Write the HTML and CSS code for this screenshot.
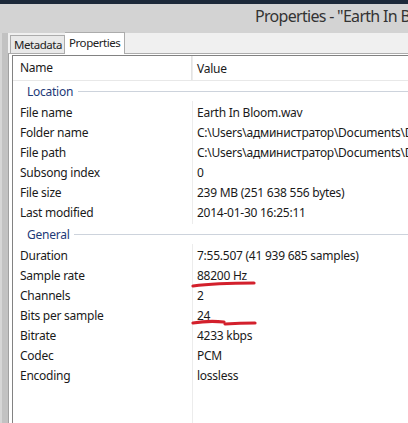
FILE: index.html
```html
<!DOCTYPE html>
<html>
<head>
<meta charset="utf-8">
<link rel="stylesheet" href="styles.css">
</head>
<body>
<div class="topstrip"></div>
<div class="titlebar"><span class="title">Properties - "Earth In Bloom.wav"</span></div>
<div class="main">
  <div class="leftframe"></div>
  <div class="dialog">
    <div class="tabs">
      <div class="tab">Metadata</div>
      <div class="tab active">Properties</div>
    </div>
    <div class="tabpage">
      <div class="list">
        <div class="header">
          <div class="cell name">Name</div>
          <div class="cell value">Value</div>
        </div>
        <div class="group first"><span>Location</span><i></i></div>
        <div class="row"><div class="cell name">File name</div><div class="cell value">Earth In Bloom.wav</div></div>
        <div class="row"><div class="cell name">Folder name</div><div class="cell value">C:\Users\администратор\Documents\Downloads</div></div>
        <div class="row"><div class="cell name">File path</div><div class="cell value">C:\Users\администратор\Documents\Downloads\Earth In Bloom.wav</div></div>
        <div class="row"><div class="cell name">Subsong index</div><div class="cell value">0</div></div>
        <div class="row"><div class="cell name">File size</div><div class="cell value">239 MB (251 638 556 bytes)</div></div>
        <div class="row"><div class="cell name">Last modified</div><div class="cell value">2014-01-30 16:25:11</div></div>
        <div class="group"><span>General</span><i></i></div>
        <div class="row"><div class="cell name">Duration</div><div class="cell value">7:55.507 (41 939 685 samples)</div></div>
        <div class="row"><div class="cell name">Sample rate</div><div class="cell value">88200 Hz</div></div>
        <div class="row"><div class="cell name">Channels</div><div class="cell value">2</div></div>
        <div class="row"><div class="cell name">Bits per sample</div><div class="cell value">24</div></div>
        <div class="row"><div class="cell name">Bitrate</div><div class="cell value">4233 kbps</div></div>
        <div class="row"><div class="cell name">Codec</div><div class="cell value">PCM</div></div>
        <div class="row"><div class="cell name">Encoding</div><div class="cell value">lossless</div></div>
      </div>
    </div>
  </div>
</div>
<svg class="marks" width="408" height="423" viewBox="0 0 408 423">
  <path d="M193 286 Q 215 283 254 283" fill="none" stroke="#d3202c" stroke-width="3.2" stroke-linecap="round"/>
  <path d="M193 323 Q 208 320.5 224 322" fill="none" stroke="#d3202c" stroke-width="3.2" stroke-linecap="round"/>
  <path d="M225 324 Q 240 323 255 323" fill="none" stroke="#d3202c" stroke-width="3.2" stroke-linecap="round"/>
</svg>
</body>
</html>
```

FILE: styles.css
```css
html, body {
  margin: 0;
  padding: 0;
}
body {
  width: 408px;
  height: 423px;
  overflow: hidden;
  position: relative;
  background: #ffffff;
  font-family: "Noto Sans", "Open Sans", sans-serif;
  font-size: 12px;
  letter-spacing: -0.25px;
  color: #1a1a1a;
}
.topstrip {
  height: 4px;
  background: #1c2939;
}
.titlebar {
  height: 29px;
  background: #d3d3d3;
  padding-left: 255px;
  white-space: nowrap;
  overflow: hidden;
  box-sizing: border-box;
}
.title {
  display: block;
  font-size: 16px;
  letter-spacing: -0.7px;
  line-height: 25px;
  color: #333333;
}
.main {
  display: flex;
  height: 390px;
}
.leftframe {
  width: 8px;
  flex: none;
  background: linear-gradient(to right, #d6d6d6 0, #d6d6d6 2px, #c2c2c2 2px, #c2c2c2 8px);
}
.dialog {
  flex: 1;
  display: flex;
  flex-direction: column;
  background: #f0f0f0;
  min-width: 0;
}
.tabs {
  height: 20px;
  display: flex;
  align-items: flex-end;
  padding-left: 2px;
}
.tab {
  height: 18px;
  box-sizing: border-box;
  border: 1px solid #acacac;
  border-bottom: 0;
  background: #e9e9e9;
  padding: 0 2px 0 3px;
  line-height: 17px;
  color: #222;
  font-size: 11.5px;
  letter-spacing: -0.45px;
  white-space: nowrap;
}
.tab.active {
  height: 22px;
  margin-bottom: -1px;
  background: #ffffff;
  border-left: 0;
  padding: 0 4px 0 4px;
  line-height: 20px;
  position: relative;
  z-index: 1;
}
.tabpage {
  flex: 1;
  background: #ffffff;
  border-top: 1px solid #acacac;
  border-left: 1px solid #a0a0a0;
  padding: 1px 0 0 3px;
}
.list {
  height: 100%;
  border-top: 1px solid #828282;
  border-left: 1px solid #828282;
  background: linear-gradient(to right, transparent 179px, #ececec 179px, #ececec 180px, transparent 180px);
}
.header {
  display: flex;
  height: 24px;
  border-bottom: 1px solid #e8e8e8;
  align-items: center;
}
.row {
  display: flex;
  height: 20px;
  align-items: center;
}
.cell {
  white-space: nowrap;
  overflow: hidden;
}
.cell.name {
  width: 179px;
  flex: none;
  padding-left: 7px;
  box-sizing: border-box;
}
.cell.value {
  flex: 1;
  padding-left: 5px;
  min-width: 0;
}
.header .cell.name {
  border-right: 1px solid #e3e3e3;
  height: 24px;
  line-height: 24px;
}
.group {
  display: flex;
  align-items: center;
  height: 20px;
  margin: 2px 0 1px 0;
  padding-left: 14px;
  background: #ffffff;
}
.group.first {
  margin-top: 0;
}
.group span {
  color: #1e3a78;
}
.group i {
  flex: 1;
  height: 1px;
  margin-left: 5px;
  background: #cdd3dc;
}
.marks {
  position: absolute;
  left: 0;
  top: 0;
  pointer-events: none;
}
```
